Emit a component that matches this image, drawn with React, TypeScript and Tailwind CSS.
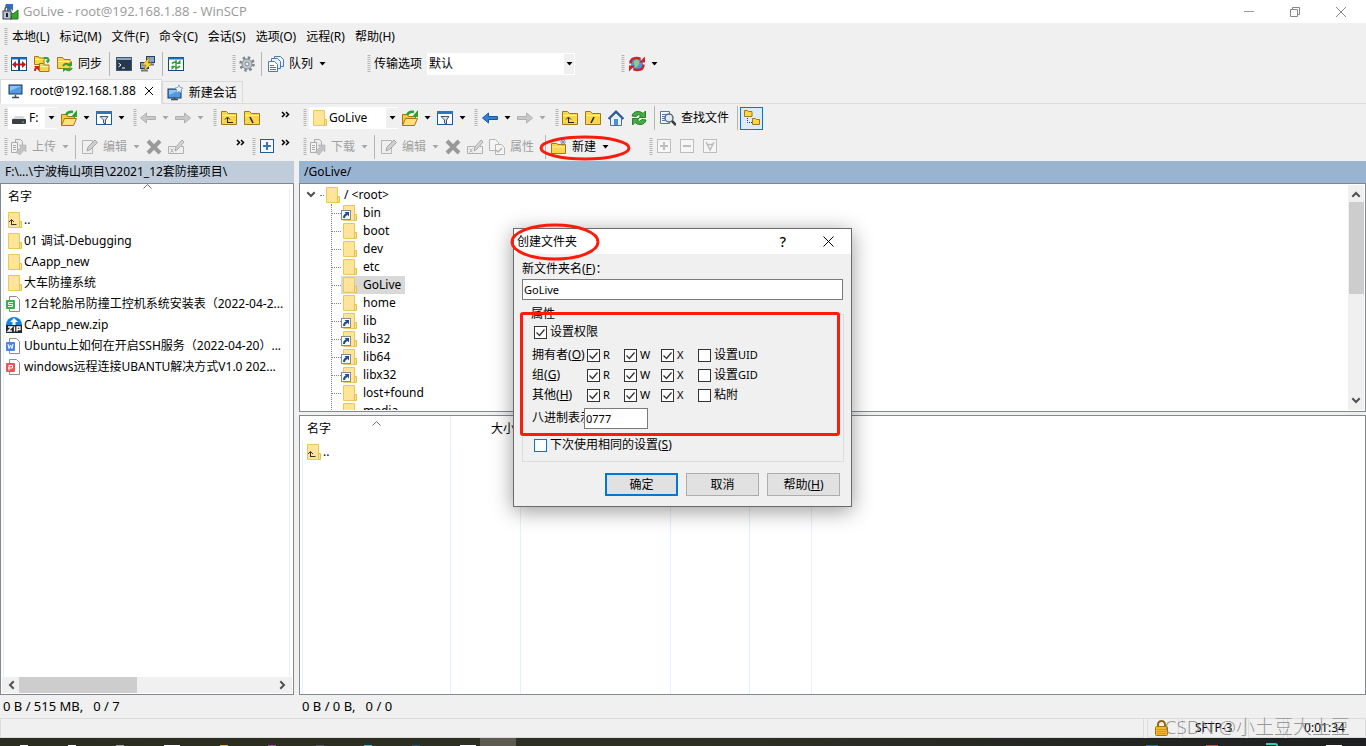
import { useState } from 'react';
import type { ReactNode } from 'react';

/* ---------- icons ---------- */

const Svg = ({ w = 16, h = 16, children }: { w?: number; h?: number; children: ReactNode }) => (
  <svg width={w} height={h} viewBox={`0 0 ${w} ${h}`} fill="none" className="shrink-0" aria-hidden="true">
    {children}
  </svg>
);

const LogoIcon = () => (
  <Svg w={17} h={17}>
    <path d="M4 1h7v7l-2-2-4 3V5L3 3z" fill="#2f6fd0" />
    <path d="M8 9l3 2 5-4v9H8l2-2-2-2z" fill="#37a62b" stroke="#1d7a1b" />
    <path d="M3 9V6.500a2.500 2.500 0 0 1 5 0V9" stroke="#56606e" strokeWidth="1.500" />
    <rect x="1" y="8" width="8" height="8" fill="#b9c3d0" stroke="#3b4656" />
    <path d="M5 10v4" stroke="#222" strokeWidth="2" />
  </Svg>
);

const CompareIcon = () => (
  <Svg>
    <rect x="0.5" y="1.500" width="7" height="13" fill="#fff" stroke="#0f4c81" />
    <rect x="8.500" y="1.500" width="7" height="13" fill="#fff" stroke="#0f4c81" />
    <path d="M0 2.500h16" stroke="#1f6fbd" strokeWidth="2" />
    <path d="M3 8.500h10" stroke="#c01820" strokeWidth="2" />
    <path d="M1 8.500L5 5v7zM15 8.500L11 5v7z" fill="#c01820" />
  </Svg>
);

const Folder = ({ x = 0, y = 0 }: { x?: number; y?: number }) => (
  <g transform={`translate(${x} ${y})`}>
    <path d="M0.500 8.500v-8h4l1 1.500h4.500v6.500z" fill="#fbd64c" stroke="#a8760b" />
    <path d="M1 3.500h8.500" stroke="#fff0a6" />
  </g>
);

const SyncBrowseIcon = () => (
  <Svg>
    <Folder x={0} y={0} />
    <Folder x={5} y={7} />
    <path d="M10 2h2.500q2 0 2 3" stroke="#2f9e33" strokeWidth="2" />
    <path d="M11.500 4.500h4.500l-2.200 3z" fill="#2f9e33" />
    <path d="M1 15q0-4 3.500-4" stroke="#d0201c" strokeWidth="2" />
    <path d="M0 10h5v5z" fill="#d0201c" />
  </Svg>
);

const SyncFolderIcon = () => (
  <Svg>
    <path d="M0.500 12.500V1.500h5l1.500 2h6v9z" fill="#fbd64c" stroke="#a8760b" />
    <path d="M1 5.500h12" stroke="#fff0a6" />
    <path d="M6 10q3-4 6-1" stroke="#2f9e33" strokeWidth="2" />
    <path d="M10 10h5V5z" fill="#2f9e33" />
    <path d="M15 12q-3 4-6 1" stroke="#2f9e33" strokeWidth="2" />
    <path d="M11 12H6v4z" fill="#2f9e33" />
  </Svg>
);

const TerminalIcon = () => (
  <Svg>
    <rect x="0.500" y="1.500" width="15" height="13" fill="#26384b" stroke="#3f5872" />
    <path d="M1 3h14" stroke="#8da7c2" strokeWidth="2" />
    <path d="M2.500 7l2.500 2-2.500 2M6 12h3" stroke="#fff" />
  </Svg>
);

const PuttyIcon = () => (
  <Svg>
    <rect x="7.500" y="0.500" width="8" height="6" fill="#7fa6d4" stroke="#2d3f57" />
    <rect x="1.500" y="6.500" width="8" height="6" fill="#7fa6d4" stroke="#2d3f57" />
    <path d="M2 14.500h7M11 8.500h4" stroke="#6b7583" strokeWidth="2" />
    <path d="M11 1L3 9h4l-2 6 8-8H9z" fill="#fbd334" stroke="#b17f0a" strokeWidth="0.700" />
  </Svg>
);

const RefreshWindowIcon = () => (
  <Svg>
    <rect x="0.500" y="1.500" width="15" height="13" fill="#fff" stroke="#0f4c81" />
    <path d="M0 2.500h16" stroke="#1f6fbd" strokeWidth="2" />
    <path d="M8 4v11" stroke="#0f4c81" />
    <path d="M4 7.500q2-2 5-1" stroke="#2f9e33" strokeWidth="1.800" />
    <path d="M8 8h4.500V3.800z" fill="#2f9e33" />
    <path d="M12 10q-2 2.500-5 1.500" stroke="#2f9e33" strokeWidth="1.800" />
    <path d="M8 9.800H3.500V14z" fill="#2f9e33" />
  </Svg>
);

const GearIcon = () => (
  <Svg>
    <circle cx="8" cy="8" r="6.500" stroke="#7d858f" strokeWidth="2.500" strokeDasharray="2.500 2.600" />
    <circle cx="8" cy="8" r="5" fill="#c3cad2" stroke="#7d858f" />
    <circle cx="8" cy="8" r="2" fill="#f0f0f0" stroke="#7d858f" />
  </Svg>
);

const QueueIcon = () => (
  <Svg>
    <path d="M6.500 0.500h6l3 3v7h-9z" fill="#e9f1f9" stroke="#4c79a8" />
    <path d="M3.500 2.500h6l3 3v7h-9z" fill="#e9f1f9" stroke="#4c79a8" />
    <path d="M0.500 5.500h6l3 3v7h-9z" fill="#fff" stroke="#4c79a8" />
    <path d="M2 9.500h4M2 11.500h6M2 13.500h6" stroke="#4c79a8" />
  </Svg>
);

const GlobeIcon = () => (
  <Svg>
    <circle cx="8" cy="8" r="6" fill="#4f93dd" />
    <path d="M5 5l3-2 3 3-2 4-3 2-1-3z" fill="#8bc98d" />
    <path d="M1.500 7.500q0-5.500 6-5.500 2.500 0 4 1" stroke="#c9252b" strokeWidth="2.500" />
    <path d="M10 6.500h6V0.500z" fill="#c9252b" />
    <path d="M14.500 8.500q0 5.500-6 5.500-2.500 0-4-1" stroke="#c9252b" strokeWidth="2.500" />
    <path d="M6 9.500H0v6z" fill="#c9252b" />
  </Svg>
);

const MonitorIcon = ({ star = false }: { star?: boolean }) => (
  <Svg>
    <rect x="1" y={star ? 4 : 2} width="13" height="9" fill="#4f9be6" stroke="#1d3450" />
    <path d={star ? 'M2 5h11L2 10z' : 'M2 3h11L2 8z'} fill="#8fc3f5" />
    <path d="M7.500 12v2M4 14.500h7" stroke="#3c4a5a" strokeWidth="1.500" />
    {star && (
      <path
        d="M12 0l1.200 2.500L16 3l-2 2 .5 3L12 6.500 9.500 8l.5-3-2-2 2.800-.5z"
        fill="#eef5fb"
        stroke="#6f94b8"
        strokeWidth="0.800"
      />
    )}
  </Svg>
);

const DriveIcon = () => (
  <Svg w={14} h={14}>
    <path d="M3 5h8l3 4H0z" fill="#d5d8db" />
    <rect x="0" y="8" width="14" height="5" rx="1" fill="#3b3f43" />
    <path d="M10 11h2" stroke="#4fd16a" />
  </Svg>
);

const OpenFolderIcon = () => (
  <Svg>
    <path d="M0.500 15V4.500h5l1 2h7V9" fill="#f5c83a" stroke="#a8760b" />
    <path d="M0.500 15.500l3-7h12l-3 7z" fill="#fde27a" stroke="#a8760b" />
    <path d="M5 5q2-4 7-3" stroke="#2f9e33" strokeWidth="2.500" />
    <path d="M10 7h6V0z" fill="#2f9e33" />
  </Svg>
);

const FilterIcon = () => (
  <Svg>
    <rect x="0.500" y="1.500" width="15" height="13" fill="#fff" stroke="#1b5a9c" />
    <path d="M0 2.500h16" stroke="#2e75b9" strokeWidth="3" />
    <path d="M4 6.500h8L9.500 10v4l-2-1v-3z" fill="#d8dde2" stroke="#4a5664" />
  </Svg>
);

const ArrowIcon = ({ dir, blue = false }: { dir: 'left' | 'right'; blue?: boolean }) => (
  <Svg>
    <path
      d={dir === 'left' ? 'M0.500 8L6.500 3v3.500h9v3h-9V13z' : 'M15.500 8L9.500 3v3.500h-9v3h9V13z'}
      fill={blue ? '#2f7fdb' : '#c9c9c9'}
      stroke={blue ? '#1c56a3' : '#b0b0b0'}
    />
  </Svg>
);

const BigFolderIcon = ({ mark }: { mark: 'up' | 'back' | 'slash' }) => (
  <Svg>
    <path d="M0.500 14.500V1.500h5l2 2h8v11z" fill="#fbd64c" stroke="#a8760b" />
    <path d="M1 5.500h14" stroke="#fff0a6" />
    {mark === 'up' && <path d="M6 12.500h6M6.500 13V8M4 9.500l2.500-2.500L9 9.500" stroke="#222" />}
    {mark === 'back' && <path d="M6 7l3 6" stroke="#222" strokeWidth="1.500" />}
    {mark === 'slash' && <path d="M9 7l-3 6" stroke="#222" strokeWidth="1.500" />}
  </Svg>
);

const TransferIcon = () => (
  <Svg>
    <path d="M4.500 0.500h5l2 2v8h-7z" fill="#ececec" stroke="#ababab" />
    <path d="M0.500 3.500h6v10h-6zM2 6.500h3M2 8.500h3M2 10.500h3" fill="#f2f2f2" stroke="#ababab" />
    <path d="M5 13l5-5-2-2h7v7l-2-2-4 5z" fill="#c2c2c2" stroke="#ababab" strokeWidth="0.500" />
  </Svg>
);

const EditIcon = () => (
  <Svg>
    <path d="M0.500 1.500h10v13h-10z" fill="#f0f0f0" stroke="#b5b5b5" />
    <path d="M5 12l1-4 7-7 2.500 2.500-7 7z" fill="#cfcfcf" stroke="#a6a6a6" />
  </Svg>
);

const DeleteIcon = () => (
  <Svg>
    <path d="M2 2l12 12M14 2L2 14" stroke="#999" strokeWidth="4" />
  </Svg>
);

const RenameIcon = () => (
  <Svg>
    <path d="M8 7.500H0.500v7h15v-7H13M2.500 9.500l3 4M5.500 9.500l-3 4" stroke="#b0b0b0" />
    <path d="M7 12l1-4 6-7 2 2-6 7z" fill="#d6d6d6" stroke="#a8a8a8" />
  </Svg>
);

const PropsIcon = () => (
  <Svg>
    <path d="M0.500 0.500h6l3 3v8h-9z" fill="#f4f4f4" stroke="#b5b5b5" />
    <path d="M6.500 5.500h6l3 3v7h-9z" fill="#f4f4f4" stroke="#b5b5b5" />
    <path d="M7 11l2 2 4-4" stroke="#b5b5b5" strokeWidth="1.500" />
  </Svg>
);

const BoxIcon = ({ kind, blue = false }: { kind: 'plus' | 'minus' | 'invert'; blue?: boolean }) => (
  <Svg w={15} h={15}>
    <rect x="0.500" y="0.500" width="13" height="13" fill="#f6f6f6" stroke={blue ? '#1f5c99' : '#bdbdbd'} />
    {kind === 'plus' && <path d="M3 7h8M7 3v8" stroke={blue ? '#3a76b0' : '#bdbdbd'} strokeWidth="2" />}
    {kind === 'minus' && <path d="M3 7h8" stroke="#bdbdbd" strokeWidth="2" />}
    {kind === 'invert' && <path d="M3 3l4 8 4-8M4.500 5.500h5" stroke="#bdbdbd" strokeWidth="1.500" />}
  </Svg>
);

const HomeIcon = () => (
  <Svg>
    <path d="M2.500 8v7.500h11V8L8 3z" fill="#e8eef5" stroke="#55708f" />
    <path d="M0.500 9L8 1.500 15.500 9" stroke="#2f5f96" strokeWidth="2" />
    <rect x="6" y="9" width="4" height="6" fill="#4a90d9" />
  </Svg>
);

const RefreshIcon = () => (
  <Svg>
    <path d="M1 6q1-4.500 6-4.500 3 0 5 2L14.500 1v6.500H8l2-2q-3-2-5 1z" fill="#44ad3f" stroke="#24802a" />
    <path d="M15 10q-1 4.500-6 4.500-3 0-5-2L1.500 15V8.500H8l-2 2q3 2 5-1z" fill="#44ad3f" stroke="#24802a" />
  </Svg>
);

const FindIcon = () => (
  <Svg>
    <path d="M0.500 1.500h9v12h-9zM2 4.500h5M2 6.500h3M2 8.500h3M2 10.500h3" fill="#f5f9fd" stroke="#4c79a8" />
    <circle cx="9" cy="8" r="4" fill="#dcecf8" stroke="#5b6b7b" strokeWidth="1.500" />
    <path d="M12 11l4 4" stroke="#333b45" strokeWidth="2.500" />
  </Svg>
);

const TreeIcon = () => (
  <Svg>
    <path d="M0.500 6.500v-6h3l1 1H8v5zM8.500 14.500v-6h3l1 1H15.500v5z" fill="#fbd64c" stroke="#a8760b" />
    <path d="M3.500 8v4.500H8" stroke="#333" strokeDasharray="1 1" />
  </Svg>
);

const NewFolderIcon = () => (
  <Svg>
    <path d="M0.500 14.500V4.500h5l1.500 1h7.500v9z" fill="#fbd64c" stroke="#a8760b" />
    <path d="M1 8h13" stroke="#fff0a6" />
    <path d="M12 0v7M9 3h6M10 1l4 4M14 1l-4 4" stroke="#6c96bd" />
  </Svg>
);

const LightFolder = ({ up = false, link = false }: { up?: boolean; link?: boolean }) => (
  <Svg>
    <path d="M2.500 0.500h11v15h-11z" fill="#ffe59a" stroke="#ecc75b" />
    <path d="M13.500 9.500h2v6h-2z" fill="#ffe59a" stroke="#e6bd45" />
    {up && <path d="M5 12.500h5.500M5.500 13V8M3 10l2.500-2.500L8 10" stroke="#333" />}
    {link && (
      <>
        <rect x="0.500" y="5.500" width="9" height="9" fill="#fff" stroke="#8a8a8a" />
        <path d="M3 13q0-3 3-4" stroke="#1b4f94" strokeWidth="2" />
        <path d="M3.500 7h4.500v4.500z" fill="#1b4f94" />
      </>
    )}
  </Svg>
);

const DocIcon = ({ kind }: { kind: 's' | 'w' | 'p' }) => (
  <Svg>
    <path d="M3.500 0.500h7l3 3v12h-10z" fill="#fff" stroke="#8d8d8d" />
    <rect
      x="0"
      y="4"
      width="9"
      height="9"
      rx="1"
      fill={kind === 's' ? '#3fae49' : kind === 'w' ? '#4a86e8' : '#ea5455'}
    />
    {kind === 's' && <path d="M7 6.500H2.500v2h4v2H2" stroke="#fff" />}
    {kind === 'w' && <path d="M2 6l1 4.500L4.500 7 6 10.500 7 6" stroke="#fff" />}
    {kind === 'p' && <path d="M3 11.500v-5h3.500V9H2" stroke="#fff" />}
  </Svg>
);

const ZipIcon = () => (
  <Svg>
    <path d="M0 8a8 8 0 0 1 16 0z" fill="#1583d8" />
    <path d="M8 1l4 4H9.500v3h-3V5H4z" fill="#fff" />
    <rect y="8" width="16" height="8" fill="#20262c" />
    <path d="M2 10h4l-4 4h4M8.500 9.500v5M11 14.500V10h3v2.500h-3" stroke="#fff" strokeWidth="1.300" />
  </Svg>
);

const LockIcon = () => (
  <Svg w={13} h={16}>
    <path d="M3 8V4.500a3.500 3.500 0 0 1 7 0V8" stroke="#8f6a12" strokeWidth="2" />
    <rect x="0.500" y="6.500" width="12" height="9" rx="1" fill="#f2b92c" stroke="#a87408" />
    <path d="M2 9.500h9M2 11.500h9M2 13.500h9" stroke="#d8961a" />
  </Svg>
);

const chevrons = {
  up: 'M2 7l3-3 3 3',
  down: 'M2 3l3 3 3-3',
  left: 'M7 2L4 5l3 3',
  right: 'M3 2l3 3-3 3',
};

const Chevron = ({ dir }: { dir: keyof typeof chevrons }) => (
  <Svg w={10} h={10}>
    <path d={chevrons[dir]} stroke="#505050" strokeWidth="2" strokeLinecap="square" />
  </Svg>
);

const SortMark = () => (
  <Svg w={9} h={5}>
    <path d="M0.500 4.500l4-4 4 4" stroke="#6d6d6d" />
  </Svg>
);

/* ---------- toolbar parts ---------- */

const Caret = ({ muted = false }: { muted?: boolean }) => (
  <Svg w={7} h={4}>
    <path d="M0.500 0h6l-3 3.500z" fill={muted ? '#a5a5a5' : '#000'} />
  </Svg>
);

const More = () => (
  <button type="button" aria-label="更多" className="mb-2 flex">
    <Svg w={9} h={7}>
      <path d="M1 1l2.500 2.500L1 6M5 1l2.500 2.500L5 6" stroke="#000" strokeWidth="1.500" />
    </Svg>
  </button>
);

const Grip = () => (
  <Svg w={4} h={18}>
    <path d="M2 0v18" stroke="#b4b4b4" strokeWidth="3" strokeDasharray="1 1" />
  </Svg>
);

const Sep = () => <span className="h-6 w-px shrink-0 bg-[#b5b5b5]" />;

const Tool = ({
  label,
  icon,
  text,
  muted = false,
  caret = false,
}: {
  label: string;
  icon: ReactNode;
  text?: string;
  muted?: boolean;
  caret?: boolean;
}) => (
  <button type="button" aria-label={label} className="flex shrink-0 items-center gap-[6px]">
    <span className={`flex items-center gap-[5px] ${muted ? 'text-[#a0a0a0]' : ''}`}>
      {icon}
      {text && <span>{text}</span>}
    </span>
    {caret && <Caret muted={muted} />}
  </button>
);

const menus = ['本地(L)', '标记(M)', '文件(F)', '命令(C)', '会话(S)', '选项(O)', '远程(R)', '帮助(H)'];

const localFiles: { name: string; icon: ReactNode }[] = [
  { name: '..', icon: <LightFolder up /> },
  { name: '01 调试-Debugging', icon: <LightFolder /> },
  { name: 'CAapp_new', icon: <LightFolder /> },
  { name: '大车防撞系统', icon: <LightFolder /> },
  { name: '12台轮胎吊防撞工控机系统安装表（2022-04-2...', icon: <DocIcon kind="s" /> },
  { name: 'CAapp_new.zip', icon: <ZipIcon /> },
  { name: 'Ubuntu上如何在开启SSH服务（2022-04-20）...', icon: <DocIcon kind="w" /> },
  { name: 'windows远程连接UBANTU解决方式V1.0 202...', icon: <DocIcon kind="p" /> },
];

const remoteDirs = [
  { name: 'bin', link: true },
  { name: 'boot' },
  { name: 'dev' },
  { name: 'etc' },
  { name: 'GoLive' },
  { name: 'home' },
  { name: 'lib', link: true },
  { name: 'lib32', link: true },
  { name: 'lib64', link: true },
  { name: 'libx32', link: true },
  { name: 'lost+found' },
  { name: 'media' },
];

const TitleBar = () => (
  <header className="flex h-[23px] shrink-0 items-center bg-white pl-[2px] text-[#999]">
    <LogoIcon />
    <h1 className="ml-1 flex-1 font-['Open_Sans','Noto_Sans_CJK_SC',sans-serif] text-[13px]">
      GoLive - root@192.168.1.88 - WinSCP
    </h1>
    <button type="button" aria-label="最小化" className="flex w-[46px] justify-center">
      <Svg w={10} h={10}>
        <path d="M0 4.500h10" stroke="#999" />
      </Svg>
    </button>
    <button type="button" aria-label="还原" className="flex w-[46px] justify-center">
      <Svg w={10} h={10}>
        <path d="M0.500 2.500h7v7h-7zM2.500 2.500v-2h7v7h-2" stroke="#888" />
      </Svg>
    </button>
    <button type="button" aria-label="关闭" className="mr-[2px] flex w-[46px] justify-center">
      <Svg w={10} h={10}>
        <path d="M0 0l10 10M10 0L0 10" stroke="#888" />
      </Svg>
    </button>
  </header>
);

const MainToolbar = () => (
  <div className="flex h-[28px] shrink-0 items-center pl-1">
    <Grip />
    <div className="ml-[3px] flex items-center gap-[7px]">
      <Tool label="比较目录" icon={<CompareIcon />} />
      <Tool label="同步浏览" icon={<SyncBrowseIcon />} />
      <Tool label="同步" icon={<SyncFolderIcon />} text="同步" />
      <Sep />
    </div>
    <div className="ml-[6px] flex items-center gap-[7px]">
      <Tool label="终端" icon={<TerminalIcon />} />
      <Tool label="PuTTY" icon={<PuttyIcon />} />
      <Sep />
    </div>
    <div className="ml-[5px] mr-12 flex">
      <Tool label="刷新" icon={<RefreshWindowIcon />} />
    </div>
    <Grip />
    <div className="ml-[3px] mr-[41px] flex items-center gap-[6px]">
      <Tool label="选项" icon={<GearIcon />} />
      <Sep />
      <Tool label="队列" icon={<QueueIcon />} text="队列" caret />
    </div>
    <Grip />
    <label htmlFor="preset" className="ml-[3px]">
      传输选项
    </label>
    <div className="ml-[5px] mr-[46px] grid h-[22px] w-[148px] bg-white">
      <select id="preset" className="col-start-1 row-start-1 appearance-none bg-white pl-[2px]">
        <option>默认</option>
      </select>
      <span className="pointer-events-none col-start-1 row-start-1 flex w-3 items-center justify-center justify-self-end border border-white bg-[#f0f0f0]">
        <Caret />
      </span>
    </div>
    <Grip />
    <div className="ml-1 flex">
      <Tool label="断开" icon={<GlobeIcon />} caret />
    </div>
  </div>
);

const SessionTabs = () => (
  <nav className="flex h-[26px] shrink-0 items-end border-b border-[#dadada]">
    <a
      href="#session"
      className="-mb-px flex h-[25px] items-center border border-[#dadada] border-b-white bg-white pb-[2px] pl-[7px] pr-2"
    >
      <MonitorIcon />
      <span className="ml-[6px] mr-[9px]">root@192.168.1.88</span>
      <Svg w={8} h={8}>
        <path d="M0 0l8 8M8 0L0 8" stroke="#000" />
      </Svg>
    </a>
    <a href="#new" className="flex h-[22px] items-center gap-[6px] border border-b-0 border-[#dadada] pl-1 pr-[5px]">
      <MonitorIcon star />
      新建会话
    </a>
  </nav>
);

const LocalToolbars = () => (
  <>
    <div className="flex h-[28px] items-center pl-1">
      <Grip />
      <button type="button" className="mr-1 flex h-[22px] w-[49px] items-center bg-white pl-1">
        <DriveIcon />
        <span className="ml-[3px] flex-1 text-left">F:</span>
        <span className="flex h-5 w-3 items-center justify-center bg-[#f0f0f0]">
          <Caret />
        </span>
      </button>
      <div className="mr-2 flex gap-[6px]">
        <Tool label="打开目录" icon={<OpenFolderIcon />} caret />
        <Tool label="筛选" icon={<FilterIcon />} caret />
      </div>
      <Grip />
      <div className="ml-[3px] mr-[9px] flex gap-[6px]">
        <Tool label="后退" icon={<ArrowIcon dir="left" />} muted caret />
        <Tool label="前进" icon={<ArrowIcon dir="right" />} muted caret />
      </div>
      <Grip />
      <div className="ml-1 mr-auto flex gap-[7px]">
        <Tool label="上级目录" icon={<BigFolderIcon mark="up" />} />
        <Tool label="根目录" icon={<BigFolderIcon mark="back" />} />
      </div>
      <div className="mr-1">
        <More />
      </div>
    </div>
    <div className="flex h-[29px] items-center pl-1">
      <Grip />
      <div className="ml-[3px] flex items-center gap-[6px]">
        <Tool label="上传" icon={<TransferIcon />} text="上传" muted caret />
        <Sep />
        <Tool label="编辑" icon={<EditIcon />} text="编辑" muted caret />
        <Tool label="删除" icon={<DeleteIcon />} muted />
        <Tool label="重命名" icon={<RenameIcon />} muted />
      </div>
      <div className="ml-auto mr-[7px]">
        <More />
      </div>
      <Grip />
      <div className="ml-1 mr-[6px]">
        <Tool label="选择" icon={<BoxIcon kind="plus" blue />} />
      </div>
      <div className="mr-1">
        <More />
      </div>
    </div>
  </>
);

const RemoteToolbars = () => (
  <>
    <div className="flex h-[28px] items-center pl-1">
      <Grip />
      <button type="button" className="ml-[2px] mr-1 flex h-[22px] w-[89px] items-center bg-white pl-[2px]">
        <LightFolder />
        <span className="ml-[2px] flex-1 text-left">GoLive</span>
        <span className="flex h-5 w-3 items-center justify-center bg-[#f0f0f0]">
          <Caret />
        </span>
      </button>
      <div className="mr-2 flex gap-[6px]">
        <Tool label="打开目录" icon={<OpenFolderIcon />} caret />
        <Tool label="筛选" icon={<FilterIcon />} caret />
      </div>
      <Grip />
      <div className="ml-1 mr-[9px] flex gap-[6px]">
        <Tool label="后退" icon={<ArrowIcon dir="left" blue />} caret />
        <Tool label="前进" icon={<ArrowIcon dir="right" />} muted caret />
      </div>
      <Grip />
      <div className="ml-[3px] flex items-center gap-[7px]">
        <Tool label="上级目录" icon={<BigFolderIcon mark="up" />} />
        <Tool label="根目录" icon={<BigFolderIcon mark="slash" />} />
        <Tool label="主目录" icon={<HomeIcon />} />
        <Tool label="刷新" icon={<RefreshIcon />} />
        <Sep />
      </div>
      <div className="ml-[5px] flex items-center gap-2">
        <Tool label="查找文件" icon={<FindIcon />} text="查找文件" />
        <Sep />
      </div>
      <button
        type="button"
        aria-label="目录树"
        className="ml-[2px] flex h-[23px] w-[23px] items-center justify-center border border-[#0078d7] bg-[#dcebf7]"
      >
        <TreeIcon />
      </button>
    </div>
    <div className="flex h-[29px] items-center pl-1">
      <Grip />
      <div className="ml-[3px] flex items-center gap-[6px]">
        <Tool label="下载" icon={<TransferIcon />} text="下载" muted caret />
        <Sep />
        <Tool label="编辑" icon={<EditIcon />} text="编辑" muted caret />
        <Tool label="删除" icon={<DeleteIcon />} muted />
        <Tool label="重命名" icon={<RenameIcon />} muted />
        <Tool label="属性" icon={<PropsIcon />} text="属性" muted />
      </div>
      <div className="relative ml-[11px] mr-10 flex items-center gap-[5px]">
        <Sep />
        <Tool label="新建" icon={<NewFolderIcon />} text="新建" caret />
        <svg width="92" height="26" viewBox="0 0 92 26" fill="none" className="pointer-events-none absolute -left-[6px] top-0">
          <ellipse cx="46" cy="13" rx="44" ry="11" stroke="#fb1c0c" strokeWidth="3" />
        </svg>
      </div>
      <Grip />
      <div className="ml-1 flex gap-2">
        <Tool label="选择" icon={<BoxIcon kind="plus" />} />
        <Tool label="取消选择" icon={<BoxIcon kind="minus" />} />
        <Tool label="反选" icon={<BoxIcon kind="invert" />} />
      </div>
    </div>
  </>
);

const LocalPanel = () => (
  <section className="flex min-h-0 flex-1 flex-col border border-[#828790] bg-white">
    <div className="flex h-[5px] shrink-0 items-end justify-center">
      <SortMark />
    </div>
    <div className="min-h-0 flex-1 pl-[2px] pr-[3px]">
      <table className="h-full w-full border-separate border-spacing-0">
        <thead>
          <tr className="h-5">
            <th className="border-r border-[#ededed] py-0 pb-1 pl-[5px] text-left font-normal">名字</th>
          </tr>
        </thead>
        <tbody>
          {localFiles.map((f) => (
            <tr key={f.name} className="h-[21px]">
              <td className="border-x border-[#e5f1fb] py-0 pl-[2px]">
                <span className="flex items-center gap-[2px] whitespace-nowrap">
                  {f.icon}
                  {f.name}
                </span>
              </td>
            </tr>
          ))}
          <tr>
            <td className="border-x border-[#e5f1fb]" />
          </tr>
        </tbody>
      </table>
    </div>
    <div className="mx-px mb-px flex h-4 shrink-0 items-center bg-[#f0f0f0] px-1">
      <Chevron dir="left" />
      <div className="flex flex-1 px-[3px]">
        <div className="h-4 w-[118px] bg-[#cdcdcd]" />
      </div>
      <Chevron dir="right" />
    </div>
  </section>
);

const RemoteTree = () => (
  <section className="flex h-[229px] shrink-0 overflow-hidden border border-[#828790] bg-white p-px">
    <ul className="flex-1 overflow-hidden pl-[5px] pt-[1px]">
      <li className="flex h-[18px] items-center">
        <Chevron dir="down" />
        <span className="ml-1 w-1 border-t border-dotted border-[#808080]" />
        <LightFolder />
        <span className="ml-1">/ &lt;root&gt;</span>
      </li>
      <li>
        <ul className="ml-[25px] border-l border-dotted border-[#808080]">
          {remoteDirs.map((d) => (
            <li key={d.name} className="flex h-[18px] items-center">
              <span className="w-[9px] border-t border-dotted border-[#808080]" />
              <span className={`flex h-[18px] items-center gap-[6px] pr-1 ${d.name === 'GoLive' ? 'bg-[#d9d9d9]' : ''}`}>
                <LightFolder link={d.link} />
                <span>{d.name}</span>
              </span>
            </li>
          ))}
        </ul>
      </li>
    </ul>
    <div className="flex w-4 shrink-0 flex-col items-center bg-[#f0f0f0] py-1">
      <Chevron dir="up" />
      <div className="flex-1 pt-[3px]">
        <div className="h-[92px] w-[15px] bg-[#cdcdcd]" />
      </div>
      <Chevron dir="down" />
    </div>
  </section>
);

const RemotePanel = () => (
  <section className="mt-[3px] min-h-0 flex-1 border border-[#828790] bg-white pl-[2px]">
    <table className="h-full w-full table-fixed border-separate border-spacing-0">
      <colgroup>
        <col className="w-[149px]" />
        <col className="w-[70px]" />
        <col className="w-[150px]" />
        <col className="w-[79px]" />
        <col className="w-[62px]" />
        <col />
      </colgroup>
      <thead>
        <tr className="h-[25px]">
          <th className="border-r border-[#ededed] py-0 pl-[5px] text-left font-normal">
            <span className="flex justify-between">
              名字
              <span className="mr-[69px]">
                <SortMark />
              </span>
            </span>
          </th>
          <th className="border-r border-[#ededed] py-0 pr-[5px] text-right font-normal">大小</th>
          <th className="border-r border-[#ededed]" />
          <th className="border-r border-[#ededed]" />
          <th className="border-r border-[#ededed]" />
          <th />
        </tr>
      </thead>
      <tbody>
        <tr className="h-[22px]">
          <td className="border-x border-[#e5f1fb] py-0 pl-[2px]">
            <span className="flex items-center gap-[2px]">
              <LightFolder up />
              ..
            </span>
          </td>
          <td className="border-r border-[#e5f1fb]" />
          <td className="border-r border-[#e5f1fb]" />
          <td className="border-r border-[#e5f1fb]" />
          <td className="border-r border-[#e5f1fb]" />
          <td />
        </tr>
        <tr>
          <td className="border-x border-[#e5f1fb]" />
          <td className="border-r border-[#e5f1fb]" />
          <td className="border-r border-[#e5f1fb]" />
          <td className="border-r border-[#e5f1fb]" />
          <td className="border-r border-[#e5f1fb]" />
          <td />
        </tr>
      </tbody>
    </table>
  </section>
);

/* ---------- dialog ---------- */

const Check = ({ label, on = false, focus = false }: { label: ReactNode; on?: boolean; focus?: boolean }) => {
  const [checked, setChecked] = useState(on);
  return (
    <label className="flex items-center gap-[3px] whitespace-nowrap">
      <span className="grid h-[13px] w-[13px] shrink-0">
        <input
          type="checkbox"
          checked={checked}
          onChange={(e) => setChecked(e.target.checked)}
          className={`col-start-1 row-start-1 h-[13px] w-[13px] appearance-none border bg-white ${focus ? 'border-[#0078d7]' : 'border-[#333]'}`}
        />
        {checked && (
          <svg width="13" height="13" viewBox="0 0 13 13" fill="none" className="pointer-events-none col-start-1 row-start-1">
            <path d="M2.500 6.500l3 3 5-6" stroke="#333" strokeWidth="1.300" />
          </svg>
        )}
      </span>
      <span>{label}</span>
    </label>
  );
};

const Small = ({ children }: { children: ReactNode }) => <span className="text-[11px]">{children}</span>;

const permRows = [
  { name: '拥有者', key: 'O', extra: '设置', id: 'UID' },
  { name: '组', key: 'G', extra: '设置', id: 'GID' },
  { name: '其他', key: 'H', extra: '粘附', id: '' },
];

const CreateFolderDialog = () => {
  const [name, setName] = useState('GoLive');
  const [octal, setOctal] = useState('0777');

  return (
    <div
      role="dialog"
      aria-labelledby="dlg-title"
      className="absolute left-[513px] top-[228px] w-[339px] border border-[#6b6b6b] bg-[#f0f0f0] shadow-[0_4px_20px_rgba(0,0,0,0.4)]"
    >
      <div className="flex h-[25px] items-center bg-white pl-[3px]">
        <h2 id="dlg-title" className="flex-1">
          创建文件夹
        </h2>
        <button type="button" aria-label="帮助" className="w-[46px] pl-[2px] text-sm font-medium">
          ?
        </button>
        <button type="button" aria-label="关闭" className="flex w-[46px] justify-center">
          <Svg w={11} h={11}>
            <path d="M0.500 0.500l10 10M10.500 0.500l-10 10" stroke="#000" />
          </Svg>
        </button>
      </div>

      <form className="px-2 pb-[10px] pt-[6px]" onSubmit={(e) => e.preventDefault()}>
        <label htmlFor="folder" className="block h-[19px] leading-[18px]">
          新文件夹名(<u>F</u>)：
        </label>
        <input
          id="folder"
          value={name}
          onChange={(e) => setName(e.target.value)}
          className="h-[21px] w-[321px] border border-[#7a7a7a] bg-white px-px text-[11px] outline-none"
        />

        <fieldset className="mt-[6px] w-[322px] border border-[#dcdcdc] pb-[6px] pl-[9px]">
          <legend className="-ml-[2px] px-px leading-4">属性</legend>
          <div className="flex h-5 items-center pl-[2px]">
            <Check label="设置权限" on />
          </div>
          <div className="mt-[3px]">
            {permRows.map((r) => (
              <div key={r.key} className="grid h-5 grid-cols-[55px_37px_37px_37px_1fr] items-center">
                <span className="whitespace-nowrap">
                  {r.name}(<u>{r.key}</u>)
                </span>
                <Check label={<Small>R</Small>} on />
                <Check label={<Small>W</Small>} on />
                <Check label={<Small>X</Small>} on />
                <Check
                  label={
                    <>
                      {r.extra}
                      {r.id && <Small>{r.id}</Small>}
                    </>
                  }
                />
              </div>
            ))}
          </div>
          <div className="mt-[2px] flex h-[22px] items-center">
            <label htmlFor="octal" className="w-[52px] overflow-hidden whitespace-nowrap">
              八进制表示
            </label>
            <input
              id="octal"
              value={octal}
              onChange={(e) => setOctal(e.target.value)}
              className="h-[21px] w-[64px] border border-[#7a7a7a] bg-white px-px text-[11px] outline-none"
            />
          </div>
          <div className="mt-[6px] flex h-5 items-center pl-[2px]">
            <Check
              label={
                <>
                  下次使用相同的设置(<u>S</u>)
                </>
              }
              focus
            />
          </div>
        </fieldset>

        <div className="mt-[11px] flex justify-end gap-2 pr-[3px]">
          <button type="submit" className="h-[23px] w-[73px] border-2 border-[#0078d7] bg-[#e1e1e1]">
            确定
          </button>
          <button type="button" className="h-[23px] w-[73px] border border-[#adadad] bg-[#e1e1e1]">
            取消
          </button>
          <button type="button" className="h-[23px] w-[73px] border border-[#adadad] bg-[#e1e1e1]">
            帮助(<u>H</u>)
          </button>
        </div>
      </form>

      {/* red marks */}
      <svg width="90" height="38" viewBox="0 0 90 38" fill="none" className="pointer-events-none absolute -left-1 -top-[6px]">
        <ellipse cx="45" cy="19" rx="43" ry="17" stroke="#fb1c0c" strokeWidth="3" />
      </svg>
      <div className="pointer-events-none absolute left-[6px] top-[83px] h-[124px] w-[320px] rounded-[3px] border-[3px] border-[#fb1c0c]" />
    </div>
  );
};

const StatusBar = () => (
  <footer className="relative flex h-5 shrink-0 items-stretch gap-[3px] border-t border-[#dcdcdc]">
    <span className="flex-1 border border-t-0 border-[#dcdcdc]" />
    <span className="flex w-[32px] items-center border border-t-0 border-[#dcdcdc] pl-[7px]">
      <LockIcon />
    </span>
    <span className="flex w-[63px] items-center border border-t-0 border-[#dcdcdc] pl-3">SFTP-3</span>
    <span className="w-[36px] border border-t-0 border-[#dcdcdc]" />
    <span className="flex w-[79px] items-center justify-center border border-t-0 border-[#dcdcdc] pr-1">0:01:34</span>
    <span className="pointer-events-none absolute right-4 -top-1 whitespace-nowrap text-[19px] font-light leading-6 text-[#808080]/80">
      CSDN @小土豆大土豆
    </span>
  </footer>
);

const Taskbar = () => (
  <div className="flex h-2 shrink-0 items-end overflow-hidden bg-gradient-to-r from-[#2b2c20] via-[#2f3024] to-[#1d1f20]">
    <div className="flex flex-1 items-end gap-10 pl-5">
      <span className="h-px w-2 bg-white" />
      <span className="h-px w-2 bg-white" />
      <span className="h-px w-2 bg-[#aaa]" />
      <span className="h-px w-4 bg-white" />
      <span className="h-px w-2 bg-[#e8b923]" />
      <span className="h-px w-2 bg-[#b04cc0]" />
      <span className="h-px w-2 bg-[#555]" />
      <span className="h-px w-2 bg-[#4cc0d0]" />
      <span className="h-px w-2 bg-[#2a5a7a]" />
      <span className="-mr-9 h-px w-4 bg-white" />
      <span className="h-2 w-9 bg-[#5d5a51]" />
    </div>
    <div className="flex items-end gap-12 pr-6">
      <span className="h-px w-3 bg-[#2a6ae0]" />
      <span className="h-px w-3 bg-[#e04a1a]" />
      <span className="h-[3px] w-3 rounded-tr-full border-r-2 border-t-2 border-[#2ad0b8]" />
      <span className="h-px w-4 bg-white" />
    </div>
  </div>
);

const App = () => {
  return (
    <div className="relative flex h-screen min-h-[600px] min-w-[900px] flex-col overflow-hidden bg-[#f0f0f0] font-['Noto_Sans','Noto_Sans_CJK_SC',sans-serif] text-xs text-black">
      <TitleBar />

      <nav className="flex h-[27px] shrink-0 items-center pl-1">
        <Grip />
        <div className="ml-1 flex gap-[10px]">
          {menus.map((m) => (
            <button key={m} type="button">
              {m}
            </button>
          ))}
        </div>
      </nav>

      <MainToolbar />
      <SessionTabs />

      <main className="flex min-h-0 flex-1 gap-[5px]">
        <div className="flex w-[294px] shrink-0 flex-col">
          <LocalToolbars />
          <div className="flex h-[22px] shrink-0 items-center bg-[#bfcddb] pl-[5px]">F:\...\宁波梅山项目\22021_12套防撞项目\</div>
          <LocalPanel />
          <div className="flex h-[23px] shrink-0 items-center whitespace-pre pl-[3px] text-[13px]">0 B / 515 MB,   0 / 7</div>
        </div>
        <div className="flex min-w-0 flex-1 flex-col">
          <RemoteToolbars />
          <div className="flex h-[22px] shrink-0 items-center bg-[#99b4d1] pl-[5px]">/GoLive/</div>
          <RemoteTree />
          <RemotePanel />
          <div className="flex h-[23px] shrink-0 items-center whitespace-pre pl-[3px] text-[13px]">0 B / 0 B,   0 / 0</div>
        </div>
      </main>

      <StatusBar />
      <Taskbar />
      <CreateFolderDialog />
    </div>
  );
};

export default App;
